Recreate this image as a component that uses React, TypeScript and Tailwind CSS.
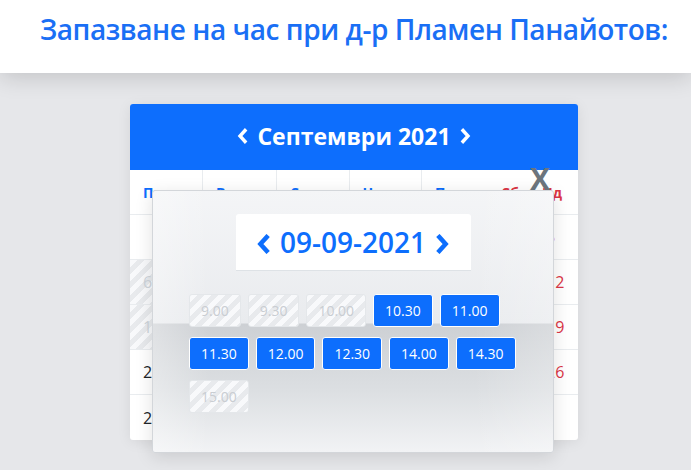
import React from "react";

const DAYS = [
  { label: "Пн", w: "w-[73px]" },
  { label: "Вт", w: "w-[74px]" },
  { label: "Ср", w: "w-[73px]" },
  { label: "Чт", w: "w-[72px]" },
  { label: "Пт", w: "w-[66px]" },
  { label: "Сб", w: "w-[45px]", red: true },
  { label: "Нд", w: "w-[45px]", red: true, pl: "pl-[9px]" },
];

const WEEKS: { d: (number | null)[]; past: number }[] = [
  { d: [null, null, 1, 2, 3, 4, 5], past: 5 },
  { d: [6, 7, 8, 9, 10, 11, 12], past: 5 },
  { d: [13, 14, 15, 16, 17, 18, 19], past: 5 },
  { d: [20, 21, 22, 23, 24, 25, 26], past: 0 },
  { d: [27, 28, 29, 30, null, null, null], past: 0 },
];

const SLOTS = [
  { t: "9.00", off: true },
  { t: "9.30", off: true },
  { t: "10.00", off: true },
  { t: "10.30" },
  { t: "11.00" },
  { t: "11.30" },
  { t: "12.00" },
  { t: "12.30" },
  { t: "14.00" },
  { t: "14.30" },
  { t: "15.00", off: true },
];

const font = "font-['Open_Sans','Noto_Sans',sans-serif]";
const stripes =
  "bg-[repeating-linear-gradient(135deg,#f8f9fb_0px,#f8f9fb_5px,#e8eaed_5px,#e8eaed_10px)]";

function Chevron({ dir, className, sw = 3 }: { dir: "l" | "r"; className: string; sw?: number }) {
  return (
    <svg viewBox="0 0 10 16" className={className} fill="none" stroke="currentColor" strokeWidth={sw} strokeLinecap="square">
      {dir === "l" ? <path d="M7.5 2.5 L2.5 8 L7.5 13.5" /> : <path d="M2.5 2.5 L7.5 8 L2.5 13.5" />}
    </svg>
  );
}

export default function App() {
  return (
    <div className={`min-h-[470px] bg-[#e6e7ea] ${font}`}>
      <header className="relative z-10 flex h-[73px] items-start justify-center bg-white pl-[17px] pt-[9px] shadow-[0_4px_22px_rgba(0,0,0,0.16)]">
        <h1 className="text-[28px] font-semibold leading-[40px] tracking-[-0.45px] text-[#1a6ff5]">
          Запазване на час при д-р Пламен Панайотов:
        </h1>
      </header>

      <div className="flex justify-center pl-[17px] pt-[31px] pb-[30px]">
        <div className="relative w-[448px] rounded-[3px] bg-white shadow-[0_2px_14px_rgba(0,0,0,0.08)]">
          <div className="flex h-[66px] items-center justify-center gap-[9px] rounded-t-[3px] bg-[#0d6efd] pb-[2px] text-white">
            <Chevron dir="l" className="h-[16px] w-[11px]" sw={3.4} />
            <span className="text-[23px] font-bold">Септември 2021</span>
            <Chevron dir="r" className="h-[16px] w-[11px]" sw={3.4} />
          </div>

          <div className="flex h-[45px] border-b border-[#e9ecef]">
            {DAYS.map((d, i) => (
              <div
                key={d.label}
                className={`${d.w} flex items-center ${d.pl ?? "pl-[13px]"} text-[14px] font-bold ${d.red ? "text-[#dc3545]" : "text-[#0d6efd]"} ${i < 4 ? "border-r border-[#e9ecef]" : ""}`}
              >
                {d.label}
              </div>
            ))}
          </div>

          {WEEKS.map((wk, r) => (
            <div key={r} className={`flex h-[45px] ${r < 4 ? "border-b border-[#e9ecef]" : ""}`}>
              {wk.d.map((n, i) => {
                const past = i < wk.past && n !== null && r > 0;
                return (
                  <div
                    key={i}
                    className={`${DAYS[i].w} flex items-center pl-[13px] text-[16px] ${past ? `${stripes} text-[#ced4da]` : i >= 5 ? "text-[#dc3545]" : "text-[#212529]"}`}
                  >
                    {n}
                  </div>
                );
              })}
            </div>
          ))}

          <div className="absolute left-[400px] top-[60px] text-[30px] font-bold leading-none text-[#6c757d]">X</div>

          <div className="absolute left-[22px] top-[86px] h-[263px] w-[402px] rounded-[3px] border border-[#d3d6da] bg-[linear-gradient(90deg,rgba(255,255,255,0.35),rgba(255,255,255,0)_14%,rgba(255,255,255,0)_80%,rgba(255,255,255,0.25)),linear-gradient(180deg,#f4f5f7_0px,#e9ebee_132px,#cdd0d4_133px,#dcdfe2_200px,#f2f3f5_262px)] shadow-[0_4px_18px_rgba(0,0,0,0.12)]">
            <div className="mx-auto mt-[23px] flex h-[57px] w-[235px] items-center justify-center gap-[10px] rounded-t-[3px] border-b border-[#dee2e6] bg-white text-[#0d6efd]">
              <Chevron dir="l" className="mt-[3px] h-[20px] w-[13px]" sw={3.6} />
              <span className="text-[28px] font-semibold leading-none">09-09-2021</span>
              <Chevron dir="r" className="mt-[3px] h-[20px] w-[13px]" sw={3.6} />
            </div>

            <div className="mx-auto mt-[23px] flex w-[328px] flex-wrap gap-x-[7px] gap-y-[10px]">
              {SLOTS.map((s) => (
                <div
                  key={s.t}
                  className={`flex h-[33px] items-center rounded-[3px] border px-[11px] text-[14px] ${s.off ? `${stripes} border-[#e4e7ea] text-[#c9cdd2]` : "border-white bg-[#0d6efd] text-white"}`}
                >
                  {s.t}
                </div>
              ))}
            </div>
          </div>
        </div>
      </div>
    </div>
  );
}
